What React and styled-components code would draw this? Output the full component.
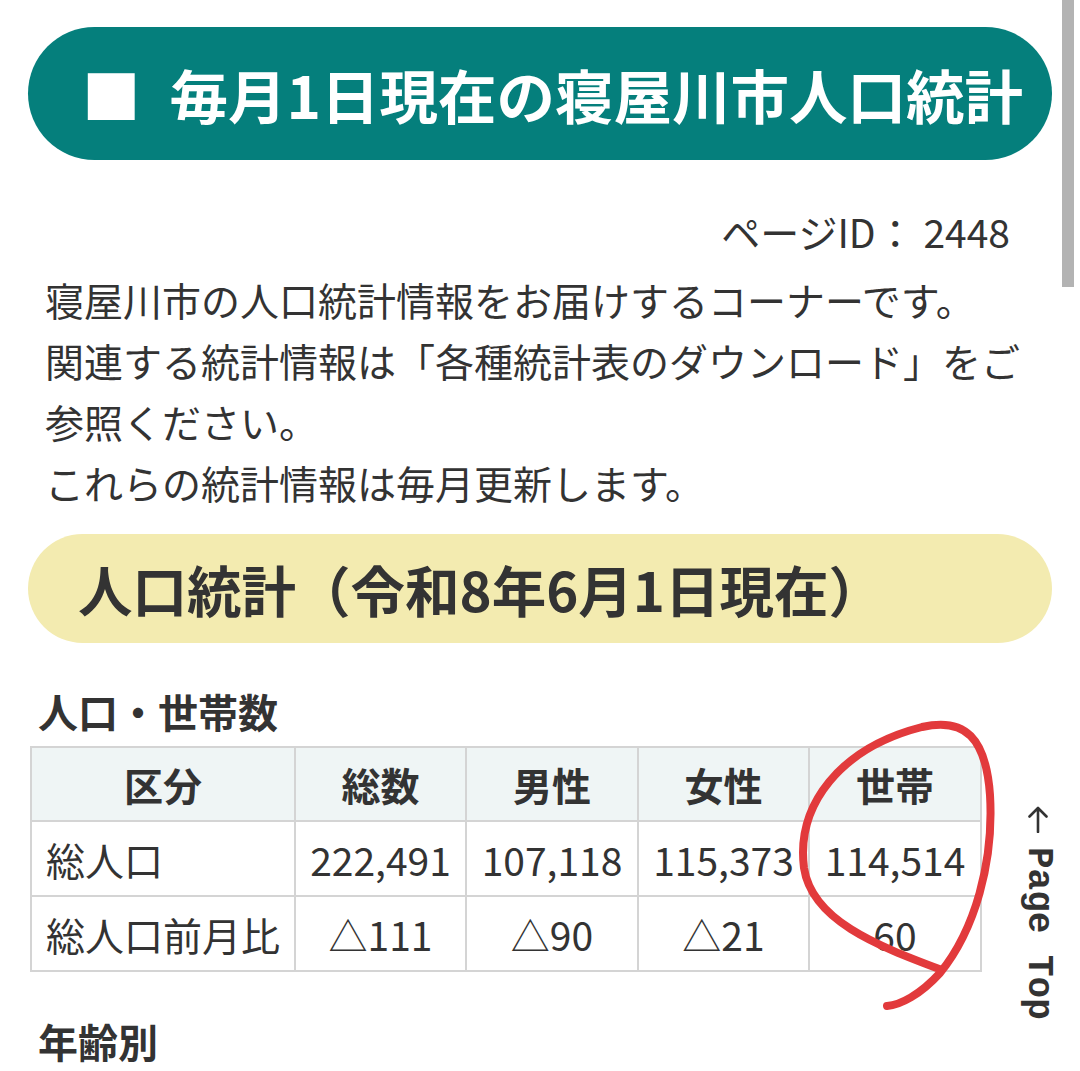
import React from "react";
import styled, { createGlobalStyle } from "styled-components";

const GlobalStyle = createGlobalStyle`
  html, body {
    margin: 0;
    padding: 0;
    background: #ffffff;
  }
  body {
    font-family: "Noto Sans CJK JP", "Noto Sans", sans-serif;
    color: #333333;
    overflow: hidden;
  }
`;

const Page = styled.div`
  position: relative;
  width: 1080px;
  height: 1071px;
  overflow: hidden;
`;

const Content = styled.main`
  padding: 27px 28px 0 28px;
`;

const TitleBar = styled.h1`
  margin: 0;
  height: 133px;
  border-radius: 67px;
  background: #057f7c;
  color: #ffffff;
  display: flex;
  align-items: center;
  padding-left: 54px;
  font-size: 58.5px;
  font-weight: 700;
`;

const Square = styled.span`
  margin-right: 29px;
`;

const PageId = styled.p`
  margin: 41px 42px 0 0;
  text-align: right;
  font-size: 39px;
  line-height: 61px;
`;

const Lead = styled.p`
  margin: 7px 0 0 0;
  padding-left: 17px;
  font-size: 39px;
  line-height: 61px;
`;

const SectionBar = styled.h2`
  margin: 21px 0 0 0;
  height: 109px;
  border-radius: 55px;
  background: #f3ebb0;
  display: flex;
  align-items: center;
  padding-left: 50px;
  font-size: 54.5px;
  font-weight: 700;
  color: #333333;
`;

const SubHeading = styled.h3`
  margin: ${(p) => p.$top}px 0 0 0;
  padding-left: 10px;
  font-size: 40px;
  line-height: 60px;
  font-weight: 700;
  color: #333333;
`;

const Table = styled.table`
  margin: 5px 0 0 2px;
  border-collapse: collapse;
  font-size: 39px;
  color: #333333;
`;

const HeadCell = styled.th`
  background: #eff5f5;
  border: 2px solid #d4d4d4;
  height: 72px;
  padding: 0;
  font-weight: 700;
  text-align: center;
  width: ${(p) => p.$w}px;
`;

const Cell = styled.td`
  border: 2px solid #d4d4d4;
  height: 73px;
  padding: 0 ${(p) => (p.$label ? "14px" : "0")};
  text-align: ${(p) => (p.$label ? "left" : "center")};
  white-space: nowrap;
`;

/* floating "back to top" link along the right edge */
const PageTop = styled.a`
  position: absolute;
  left: 1020px;
  top: 805px;
  width: 36px;
  display: flex;
  flex-direction: column;
  align-items: center;
  gap: 14px;
  color: #333333;
  text-decoration: none;
`;

const PageTopLabel = styled.span`
  writing-mode: vertical-rl;
  font-family: "Liberation Mono", "DejaVu Sans Mono", monospace;
  font-size: 36px;
  line-height: 36px;
  font-weight: 700;
`;

const ScrollThumb = styled.div`
  position: absolute;
  top: 0;
  right: 6px;
  width: 12px;
  height: 287px;
  background: #b3b3b3;
`;

const Scribble = styled.svg`
  position: absolute;
  left: 0;
  top: 0;
  pointer-events: none;
`;

const columns = [
  { key: "区分", w: 261 },
  { key: "総数", w: 169 },
  { key: "男性", w: 170 },
  { key: "女性", w: 169 },
  { key: "世帯", w: 170 },
];

const rows = [
  ["総人口", "222,491", "107,118", "115,373", "114,514"],
  ["総人口前月比", "△111", "△90", "△21", "60"],
];

export default function App() {
  return (
    <Page>
      <GlobalStyle />
      <Content>
        <TitleBar>
          <Square>■</Square>毎月1日現在の寝屋川市人口統計
        </TitleBar>
        <PageId>ページID： 2448</PageId>
        <Lead>
          寝屋川市の人口統計情報をお届けするコーナーです。
          <br />
          関連する統計情報は「各種統計表のダウンロード」をご参照ください。
          <br />
          これらの統計情報は毎月更新します。
        </Lead>
        <SectionBar>人口統計（令和8年6月1日現在）</SectionBar>
        <SubHeading $top={38}>人口・世帯数</SubHeading>
        <Table>
          <thead>
            <tr>
              {columns.map((c) => (
                <HeadCell key={c.key} $w={c.w}>
                  {c.key}
                </HeadCell>
              ))}
            </tr>
          </thead>
          <tbody>
            {rows.map((r) => (
              <tr key={r[0]}>
                {r.map((v, i) => (
                  <Cell key={i} $label={i === 0}>
                    {v}
                  </Cell>
                ))}
              </tr>
            ))}
          </tbody>
        </Table>
        <SubHeading $top={39}>年齢別</SubHeading>
      </Content>
      <PageTop href="#">
        <svg width="24" height="28" viewBox="0 0 24 28" aria-hidden="true">
          <path
            d="M12 27 V3 M3.5 11.5 L12 3 L20.5 11.5"
            fill="none"
            stroke="#333333"
            strokeWidth="2.6"
            strokeLinecap="round"
            strokeLinejoin="round"
          />
        </svg>
        <PageTopLabel>Page Top</PageTopLabel>
      </PageTop>
      <ScrollThumb />
      <Scribble width="1080" height="1071" viewBox="0 0 1080 1071">
        <path
          d="M 942 970 C 875 945, 812 920, 804 868 C 796 805, 840 748, 922 727 C 965 717, 986 738, 990 795 C 994 862, 975 930, 940 973 C 920 995, 900 1005, 887 1006"
          fill="none"
          stroke="#e23a3c"
          strokeWidth="8"
          strokeLinecap="round"
          strokeLinejoin="round"
        />
      </Scribble>
    </Page>
  );
}
